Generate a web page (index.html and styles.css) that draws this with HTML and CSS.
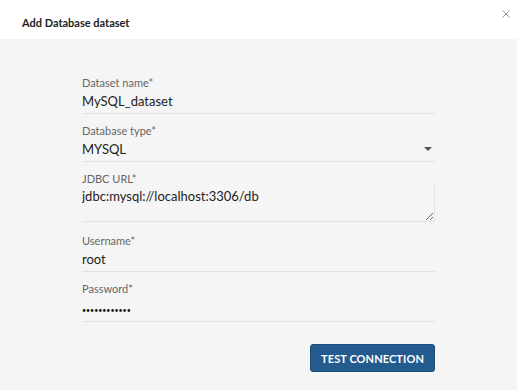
FILE: index.html
```html
<!DOCTYPE html>
<html lang="en">
  <head>
    <meta charset="UTF-8">
    <title>Add Database dataset</title>
    <link rel="stylesheet" href="styles.css">
  </head>
  <body>
    <div class="dialog">
      <div class="dialog-header">
        <h2>Add Database dataset</h2>
        <svg class="close" width="8" height="8" viewBox="0 0 8 8"><path d="M0.5 0.5l7 7M7.5 0.5l-7 7" stroke="#9a9a9a" stroke-width="1"/></svg>
      </div>
      <form class="dialog-body">
        <div class="field">
          <label for="name">Dataset name*</label>
          <input type="text" id="name" value="MySQL_dataset">
        </div>
        <div class="field">
          <label for="type">Database type*</label>
          <div class="select">
            <span>MYSQL</span>
            <svg width="8" height="4" viewBox="0 0 8 4"><path d="M0 0h8L4 4z" fill="#555"/></svg>
          </div>
        </div>
        <div class="field">
          <label for="url">JDBC URL*</label>
          <textarea id="url">jdbc:mysql://localhost:3306/db</textarea>
        </div>
        <div class="field">
          <label for="user">Username*</label>
          <input type="text" id="user" value="root">
        </div>
        <div class="field">
          <label for="pass">Password*</label>
          <input type="password" id="pass" value="rootpassword">
        </div>
        <div class="actions">
          <button type="button" class="btn-primary">Test connection</button>
        </div>
      </form>
    </div>
  </body>
</html>
```

FILE: styles.css
```css
:root {
  --background: #f5f5f5;
  --foreground: #222;
  --muted: #666;
  --border: #e2e2e2;
  --primary: #245b8e;
}

body {
  margin: 0;
  font-family: "Source Sans Pro", Lato, sans-serif;
  background-color: var(--background);
}

.dialog-header {
  display: flex;
  justify-content: space-between;
  align-items: flex-start;
  height: 39px;
  background-color: #fff;
  padding: 0 0 0 22px;
}

.dialog-header h2 {
  margin: 16px 0 0;
  font-size: 11px;
  font-weight: 700;
  color: #222;
}

.close {
  margin: 10px 7px 0 0;
}

.dialog-body {
  width: 353px;
  margin: 0 0 0 82px;
  padding-top: 36px;
}

.field {
  margin-bottom: 9px;
}

label {
  display: block;
  font-size: 11px;
  line-height: 15px;
  color: var(--muted);
}

input,
textarea,
.select {
  display: block;
  box-sizing: border-box;
  width: 100%;
  border: none;
  border-bottom: 1px solid var(--border);
  background: transparent;
  font-family: inherit;
  font-size: 13px;
  color: var(--foreground);
  padding: 2px 0 4px;
  height: 24px;
  outline: none;
}

.select {
  display: flex;
  justify-content: space-between;
  align-items: center;
  padding-right: 3px;
}

textarea {
  height: 36px;
  padding: 2px 0;
  border-right: 1px solid var(--border);
  margin-bottom: 11px;
}

input[type="password"] {
  font-size: 7px;
  height: 26px;
  padding-top: 6px;
  color: #111;
}

.actions {
  display: flex;
  justify-content: flex-end;
  margin-top: 22px;
}

.btn-primary {
  background-color: var(--primary);
  color: #fff;
  border: 1px solid #1c4c78;
  border-radius: 3px;
  height: 28px;
  width: 125px;
  font-family: inherit;
  font-size: 11px;
  font-weight: 700;
  letter-spacing: 0.1px;
  text-transform: uppercase;
}
```
